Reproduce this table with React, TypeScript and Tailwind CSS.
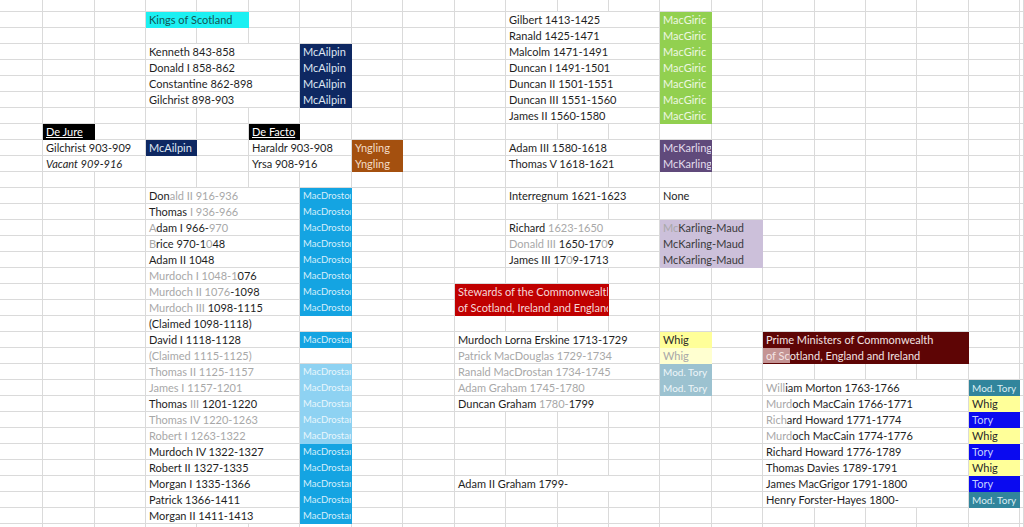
import React from 'react';

type Cell = { c: number; span?: number; t: React.ReactNode; cls?: string };

const G = ({ children }: { children: React.ReactNode }) => <span className="text-[#a8a8a8]">{children}</span>;

const spanCls: Record<number, string> = { 1: '', 2: 'col-span-2', 3: 'col-span-3', 4: 'col-span-4' };

// fills
const kings = 'bg-[#1cf0f2] text-[#135655]';
const mca = 'bg-[#0e2862] text-[#dfe6f2]';
const black = 'bg-black text-white underline';
const yng = 'bg-[#a4500f] text-[#f3dcc6]';
const mdr = 'bg-[#14a4e2] text-[#d6eefa] text-[9.5px]';
const mdrL = 'bg-[#8ed2f2] text-[#e8f6fc] text-[9.5px]';
const giric = 'bg-[#92d050] text-[#eef7e2]';
const karl = 'bg-[#604a7b] text-[#e3dcec]';
const maud = 'bg-[#ccc0da] text-[#3a3a3a]';
const red = 'bg-[#c00000] text-[#f6d8d8]';
const pm = 'bg-[#5e0505] text-[#f2e2e2]';
const whig = 'bg-[#ffff99] text-[#2a2a2a]';
const whigL = 'bg-[#ffffd0] text-[#a8a8a8]';
const modL = 'bg-[#9cc2d0] text-[#eef6f9] text-[10px]';
const mod = 'bg-[#31859c] text-[#dcedf2] text-[10px]';
const tory = 'bg-[#0a0af0] text-[#c4d0ff]';

const rows: Record<number, Cell[]> = {
  0: [{ c: 3, span: 2, t: 'Kings of Scotland', cls: kings }, { c: 10, span: 3, t: 'Gilbert 1413-1425' }, { c: 13, t: 'MacGiric', cls: giric }],
  1: [{ c: 10, span: 3, t: 'Ranald 1425-1471' }, { c: 13, t: 'MacGiric', cls: giric }],
  2: [{ c: 3, span: 3, t: 'Kenneth 843-858' }, { c: 6, t: 'McAilpin', cls: mca }, { c: 10, span: 3, t: 'Malcolm 1471-1491' }, { c: 13, t: 'MacGiric', cls: giric }],
  3: [{ c: 3, span: 3, t: 'Donald I 858-862' }, { c: 6, t: 'McAilpin', cls: mca }, { c: 10, span: 3, t: 'Duncan I 1491-1501' }, { c: 13, t: 'MacGiric', cls: giric }],
  4: [{ c: 3, span: 3, t: 'Constantine 862-898' }, { c: 6, t: 'McAilpin', cls: mca }, { c: 10, span: 3, t: 'Duncan II 1501-1551' }, { c: 13, t: 'MacGiric', cls: giric }],
  5: [{ c: 3, span: 3, t: 'Gilchrist 898-903' }, { c: 6, t: 'McAilpin', cls: mca }, { c: 10, span: 3, t: 'Duncan III 1551-1560' }, { c: 13, t: 'MacGiric', cls: giric }],
  6: [{ c: 10, span: 3, t: 'James II 1560-1580' }, { c: 13, t: 'MacGiric', cls: giric }],
  7: [{ c: 1, t: 'De Jure', cls: black }, { c: 5, t: 'De Facto', cls: black }],
  8: [{ c: 1, span: 2, t: 'Gilchrist 903-909' }, { c: 3, t: 'McAilpin', cls: mca }, { c: 5, span: 2, t: 'Haraldr 903-908' }, { c: 7, t: 'Yngling', cls: yng }, { c: 10, span: 3, t: 'Adam III 1580-1618' }, { c: 13, t: 'McKarling', cls: karl }],
  9: [{ c: 1, span: 2, t: 'Vacant 909-916', cls: 'italic' }, { c: 5, span: 2, t: 'Yrsa 908-916' }, { c: 7, t: 'Yngling', cls: yng }, { c: 10, span: 3, t: 'Thomas V 1618-1621' }, { c: 13, t: 'McKarling', cls: karl }],
  11: [{ c: 3, span: 3, t: <>Don<G>ald II 916-936</G></> }, { c: 6, t: 'MacDroston', cls: mdr }, { c: 10, span: 3, t: 'Interregnum 1621-1623' }, { c: 13, t: 'None' }],
  12: [{ c: 3, span: 3, t: <>Thomas <G>I 936-966</G></> }, { c: 6, t: 'MacDroston', cls: mdr }],
  13: [{ c: 3, span: 3, t: <><G>A</G>dam I 966-<G>970</G></> }, { c: 6, t: 'MacDroston', cls: mdr }, { c: 10, span: 3, t: <>Richard <G>1623-1650</G></> }, { c: 13, span: 2, t: <><G>Mc</G>Karling-Maud</>, cls: maud }],
  14: [{ c: 3, span: 3, t: <><G>B</G>rice 970-1<G>0</G>48</> }, { c: 6, t: 'MacDroston', cls: mdr }, { c: 10, span: 3, t: <><G>Donald III</G> 1650-17<G>0</G>9</> }, { c: 13, span: 2, t: 'McKarling-Maud', cls: maud }],
  15: [{ c: 3, span: 3, t: 'Adam II 1048' }, { c: 6, t: 'MacDroston', cls: mdr }, { c: 10, span: 3, t: <>James III 17<G>0</G>9-1713</> }, { c: 13, span: 2, t: 'McKarling-Maud', cls: maud }],
  16: [{ c: 3, span: 3, t: <><G>Murdoch I 1048-1</G>076</> }, { c: 6, t: 'MacDroston', cls: mdr }],
  17: [{ c: 3, span: 3, t: <><G>Murdoch II 1076</G>-1098</> }, { c: 6, t: 'MacDroston', cls: mdr }, { c: 9, span: 3, t: 'Stewards of the Commonwealth of', cls: red }],
  18: [{ c: 3, span: 3, t: <><G>Murdoch III</G> 1098-1115</> }, { c: 6, t: 'MacDroston', cls: mdr }, { c: 9, span: 3, t: 'of Scotland, Ireland and England', cls: red }],
  19: [{ c: 3, span: 3, t: '(Claimed 1098-1118)' }],
  20: [
    { c: 3, span: 3, t: 'David I 1118-1128' }, { c: 6, t: 'MacDrostan', cls: mdr },
    { c: 9, span: 4, t: 'Murdoch Lorna Erskine 1713-1729' }, { c: 13, t: 'Whig', cls: whig },
    { c: 15, span: 4, t: 'Prime Ministers of Commonwealth', cls: pm },
  ],
  21: [
    { c: 3, span: 3, t: <G>(Claimed 1115-1125)</G> },
    { c: 9, span: 4, t: <G>Patrick MacDouglas 1729-1734</G> }, { c: 13, t: 'Whig', cls: whigL },
    { c: 15, span: 4, t: <><span className="bg-[#c49494] -ml-[3px] pl-[3px] py-[3px] text-[#f4e4e4]">of Sc</span>otland, England and Ireland</>, cls: pm },
  ],
  22: [{ c: 3, span: 3, t: <G>Thomas II 1125-1157</G> }, { c: 6, t: 'MacDrostan', cls: mdrL }, { c: 9, span: 4, t: <G>Ranald MacDrostan 1734-1745</G> }, { c: 13, t: 'Mod. Tory', cls: modL }],
  23: [
    { c: 3, span: 3, t: <G>James I 1157-1201</G> }, { c: 6, t: 'MacDrostan', cls: mdrL },
    { c: 9, span: 4, t: <G>Adam Graham 1745-1780</G> }, { c: 13, t: 'Mod. Tory', cls: modL },
    { c: 15, span: 4, t: <><G>Will</G>iam Morton 1763-1766</> }, { c: 19, t: 'Mod. Tory', cls: mod },
  ],
  24: [
    { c: 3, span: 3, t: <>Thomas <G>III</G> 1201-1220</> }, { c: 6, t: 'MacDrostan', cls: mdrL },
    { c: 9, span: 4, t: <>Duncan Graham <G>1780-</G>1799</> },
    { c: 15, span: 4, t: <><G>Murd</G>och MacCain 1766-1771</> }, { c: 19, t: 'Whig', cls: whig },
  ],
  25: [
    { c: 3, span: 3, t: <G>Thomas IV 1220-1263</G> }, { c: 6, t: 'MacDrostan', cls: mdrL },
    { c: 15, span: 4, t: <><G>Rich</G>ard Howard 1771-1774</> }, { c: 19, t: 'Tory', cls: tory },
  ],
  26: [
    { c: 3, span: 3, t: <G>Robert I 1263-1322</G> }, { c: 6, t: 'MacDrostan', cls: mdrL },
    { c: 15, span: 4, t: <><G>Murd</G>och MacCain 1774-1776</> }, { c: 19, t: 'Whig', cls: whig },
  ],
  27: [{ c: 3, span: 3, t: 'Murdoch IV 1322-1327' }, { c: 6, t: 'MacDrostan', cls: mdr }, { c: 15, span: 4, t: 'Richard Howard 1776-1789' }, { c: 19, t: 'Tory', cls: tory }],
  28: [{ c: 3, span: 3, t: 'Robert II 1327-1335' }, { c: 6, t: 'MacDrostan', cls: mdr }, { c: 15, span: 4, t: 'Thomas Davies 1789-1791' }, { c: 19, t: 'Whig', cls: whig }],
  29: [
    { c: 3, span: 3, t: 'Morgan I 1335-1366' }, { c: 6, t: 'MacDrostan', cls: mdr },
    { c: 9, span: 4, t: 'Adam II Graham 1799-' },
    { c: 15, span: 4, t: 'James MacGrigor 1791-1800' }, { c: 19, t: 'Tory', cls: tory },
  ],
  30: [{ c: 3, span: 3, t: 'Patrick 1366-1411' }, { c: 6, t: 'MacDrostan', cls: mdr }, { c: 15, span: 4, t: 'Henry Forster-Hayes 1800-' }, { c: 19, t: 'Mod. Tory', cls: mod }],
  31: [{ c: 3, span: 3, t: 'Morgan II 1411-1413' }, { c: 6, t: 'MacDrostan', cls: mdr }],
};

const COLS =
  'grid grid-cols-[43px_52px_51px_51px_52px_51px_52px_51px_52px_51px_52px_51px_51px_52px_51px_52px_51px_51px_52px_51px_1fr]';

const SheetRow = ({ cells, first }: { cells: Cell[]; first?: boolean }) => {
  const out: React.ReactNode[] = [];
  let col = 0;
  while (col < 21) {
    const cell = cells.find((x) => x.c === col);
    if (cell) {
      const span = cell.span ?? 1;
      const filled = cell.cls?.includes('bg-');
      out.push(
        <div
          key={col}
          className={`${spanCls[span]} h-4 border-r border-b ${filled ? 'border-transparent' : 'border-[#dadada]'} flex items-center pl-[3px] whitespace-nowrap overflow-hidden text-[#1e1e1e] ${cell.cls ?? ''}`}
        >
          <span>{cell.t}</span>
        </div>
      );
      col += span;
    } else {
      out.push(<div key={col} className={`${first ? 'h-3' : 'h-4'} border-r border-b border-[#dadada]`} />);
      col += 1;
    }
  }
  return <div className={COLS}>{out}</div>;
};

export default function App() {
  return (
    <div className="w-[1024px] h-[527px] overflow-hidden bg-white font-['Lato',sans-serif] text-[11px] leading-none">
      <SheetRow cells={[]} first />
      {Array.from({ length: 33 }, (_, r) => (
        <SheetRow key={r} cells={rows[r] ?? []} />
      ))}
    </div>
  );
}
